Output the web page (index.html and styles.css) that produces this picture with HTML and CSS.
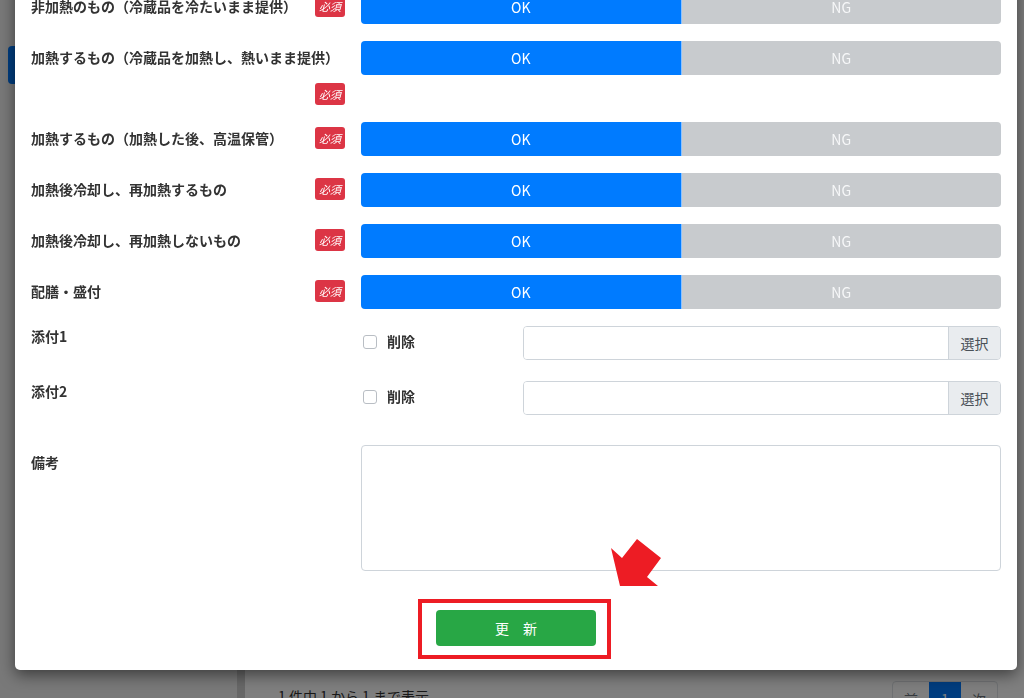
FILE: index.html
```html
<!DOCTYPE html>
<html lang="ja">
<head>
<meta charset="utf-8">
<title>衛生チェック 編集</title>
<link rel="stylesheet" href="styles.css">
</head>
<body>
<div class="page">
  <aside class="sidebar">
    <div class="nav-item"></div>
  </aside>
  <div class="divider"></div>
  <main class="main">
    <div class="content-area"></div>
    <div class="table-footer">
      <div class="info">1 件中 1 から 1 まで表示</div>
      <ul class="pager">
        <li>前</li>
        <li class="on">1</li>
        <li>次</li>
      </ul>
    </div>
  </main>
</div>

<div class="backdrop"></div>

<div class="modal">
  <div class="modal-body">
    <div class="row">
      <div class="label-col"><span class="label-text">非加熱のもの（冷蔵品を冷たいまま提供）</span><span class="badge">必須</span></div>
      <div class="control"><div class="btn-group"><div class="opt ok">OK</div><div class="opt ng">NG</div></div></div>
    </div>
    <div class="row">
      <div class="label-col"><span class="label-text">加熱するもの（冷蔵品を加熱し、熱いまま提供）</span><span class="badge">必須</span></div>
      <div class="control"><div class="btn-group"><div class="opt ok">OK</div><div class="opt ng">NG</div></div></div>
    </div>
    <div class="row">
      <div class="label-col"><span class="label-text">加熱するもの（加熱した後、高温保管）</span><span class="badge">必須</span></div>
      <div class="control"><div class="btn-group"><div class="opt ok">OK</div><div class="opt ng">NG</div></div></div>
    </div>
    <div class="row">
      <div class="label-col"><span class="label-text">加熱後冷却し、再加熱するもの</span><span class="badge">必須</span></div>
      <div class="control"><div class="btn-group"><div class="opt ok">OK</div><div class="opt ng">NG</div></div></div>
    </div>
    <div class="row">
      <div class="label-col"><span class="label-text">加熱後冷却し、再加熱しないもの</span><span class="badge">必須</span></div>
      <div class="control"><div class="btn-group"><div class="opt ok">OK</div><div class="opt ng">NG</div></div></div>
    </div>
    <div class="row">
      <div class="label-col"><span class="label-text">配膳・盛付</span><span class="badge">必須</span></div>
      <div class="control"><div class="btn-group"><div class="opt ok">OK</div><div class="opt ng">NG</div></div></div>
    </div>

    <div class="row attach">
      <div class="label-col plain"><span class="label-text">添付1</span></div>
      <div class="control split">
        <label class="check-cell"><span class="checkbox"></span><span class="check-text">削除</span></label>
        <div class="file-group"><div class="file-input"></div><div class="file-btn">選択</div></div>
      </div>
    </div>
    <div class="row attach last">
      <div class="label-col plain"><span class="label-text">添付2</span></div>
      <div class="control split">
        <label class="check-cell"><span class="checkbox"></span><span class="check-text">削除</span></label>
        <div class="file-group"><div class="file-input"></div><div class="file-btn">選択</div></div>
      </div>
    </div>

    <div class="row memo">
      <div class="label-col memo-label"><span class="label-text">備考</span></div>
      <div class="control"><textarea class="memo-area"></textarea></div>
    </div>
  </div>
  <div class="modal-footer">
    <div class="highlight"><button class="btn-update" type="button">更　新</button></div>
  </div>
</div>

<svg class="annot" viewBox="0 0 1024 698" width="1024" height="698" aria-hidden="true">
  <polygon points="611,548 622,558 637,539 661,558 647,577 658,586 620,586" fill="#ed1c24"/>
</svg>
</body>
</html>
```

FILE: styles.css
```css
html, body {
  margin: 0;
  padding: 0;
  width: 1024px;
  height: 698px;
  overflow: hidden;
  font-family: "Noto Sans CJK JP", "Noto Sans", "Liberation Sans", sans-serif;
  color: #333;
}

/* ---- page behind the modal ---- */
.page {
  display: flex;
  height: 698px;
}
.sidebar {
  width: 237px;
  flex: none;
  background: #f2f2f2;
  padding: 46px 0 0 8px;
  box-sizing: border-box;
}
.nav-item {
  height: 38px;
  border-radius: 4px;
  background: #007bff;
  margin-right: 8px;
}
.divider {
  width: 8px;
  flex: none;
  background: #d0d0d0;
}
.main {
  flex: 1;
  background: #fff;
  padding: 0 26px 0 33px;
  display: flex;
  flex-direction: column;
}
.content-area {
  height: 681px;
  flex: none;
}
.table-footer {
  display: flex;
  justify-content: space-between;
  align-items: flex-start;
}
.info {
  font-size: 14px;
  line-height: 21px;
  padding-top: 5px;
  color: #333;
}
.pager {
  display: flex;
  list-style: none;
  margin: 0;
  padding: 0;
  border: 1px solid #dee2e6;
  border-radius: 4px;
  overflow: hidden;
}
.pager li {
  width: 36px;
  height: 34px;
  line-height: 34px;
  text-align: center;
  font-size: 14px;
  color: #6c757d;
}
.pager li.on {
  width: 32px;
  background: #007bff;
  color: #fff;
}

.backdrop {
  position: fixed;
  inset: 0;
  background: rgba(0, 0, 0, 0.5);
}

/* ---- modal ---- */
.modal {
  position: absolute;
  top: -26px;
  left: 15px;
  width: 1002px;
  background: #fff;
  border-radius: 5px;
  box-shadow: 0 5px 15px rgba(0, 0, 0, 0.5);
}
.modal-body {
  padding: 16px 16px 0 16px;
}
.row {
  display: flex;
  align-items: flex-start;
  gap: 16px;
  margin-bottom: 17px;
}
.label-col {
  width: 314px;
  flex: none;
  display: flex;
  flex-wrap: wrap;
  align-items: center;
  row-gap: 15px;
  padding-top: 5px;
  font-size: 14px;
  font-weight: 700;
  line-height: 22px;
  color: #333;
}
.label-col.plain {
  padding-top: 0;
  line-height: 21px;
}
.label-col.memo-label {
  padding-top: 7px;
  line-height: 21px;
}
.badge {
  margin-left: auto;
  height: 22px;
  line-height: 22px;
  padding: 0 4px;
  border-radius: 3px;
  background: #dc3545;
  color: #fff;
  font-size: 11px;
  font-weight: 400;
  font-style: italic;
}
.control {
  flex: 1;
  min-width: 0;
}
.btn-group {
  display: flex;
  height: 34px;
}
.opt {
  flex: 1;
  box-sizing: border-box;
  text-align: center;
  line-height: 34px;
  font-size: 14px;
  color: #fff;
}
.opt.ok {
  background: #007bff;
  border-right: 1px solid #8cc2ff;
  border-radius: 4px 0 0 4px;
}
.opt.ng {
  background: #c8cbce;
  color: #f6f7f8;
  border-radius: 0 4px 4px 0;
}

.row.attach {
  margin-bottom: 21px;
}
.row.attach.last {
  margin-bottom: 30px;
}
.control.split {
  display: flex;
  align-items: flex-start;
  gap: 16px;
}
.check-cell {
  width: 146px;
  flex: none;
  display: flex;
  align-items: center;
  gap: 10px;
  padding: 5px 0 0 2px;
  box-sizing: border-box;
  line-height: 21px;
}
.checkbox {
  width: 14px;
  height: 14px;
  border: 1px solid #b9bec4;
  border-radius: 3px;
  box-sizing: border-box;
  background: #fff;
}
.check-text {
  font-size: 14px;
  font-weight: 700;
  color: #333;
}
.file-group {
  flex: 1;
  display: flex;
  height: 34px;
  border: 1px solid #ced4da;
  border-radius: 4px;
  box-sizing: border-box;
  overflow: hidden;
}
.file-input {
  flex: 1;
  background: #fff;
}
.file-btn {
  width: 51px;
  flex: none;
  background: #e9ecef;
  border-left: 1px solid #ced4da;
  text-align: center;
  line-height: 32px;
  font-size: 14px;
  color: #495057;
}

.row.memo {
  margin-bottom: 0;
}
.memo-area {
  display: block;
  width: 100%;
  height: 126px;
  box-sizing: border-box;
  border: 1px solid #ced4da;
  border-radius: 4px;
  resize: none;
  margin: 0;
  font-family: inherit;
}

.modal-footer {
  display: flex;
  justify-content: center;
  padding: 28px 3px 11px 0;
}
.highlight {
  border: 4px solid #ed1c24;
  padding: 7px 11px 9px 14px;
}
.btn-update {
  display: block;
  width: 160px;
  height: 36px;
  border: none;
  border-radius: 4px;
  background: #28a745;
  color: #fff;
  font-family: inherit;
  font-size: 14px;
  padding: 0;
}

.annot {
  position: fixed;
  left: 0;
  top: 0;
  pointer-events: none;
}
```
